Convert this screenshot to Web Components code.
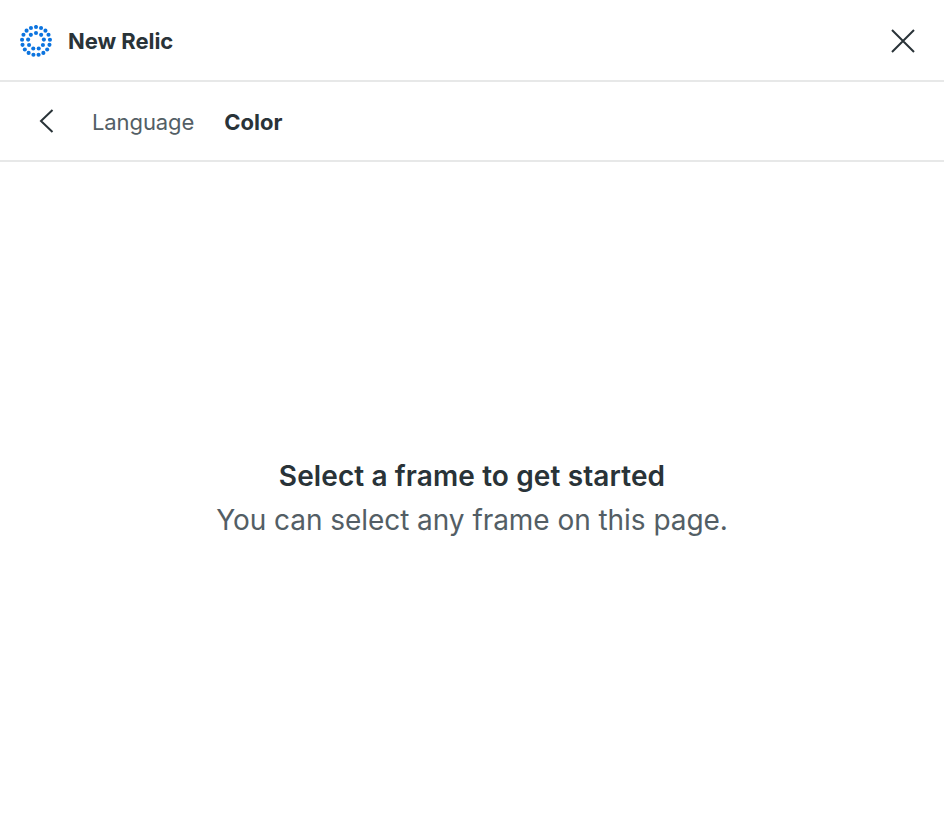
<!DOCTYPE html>
<html lang="en"><head><meta charset="utf-8"><title>New Relic</title>
<style>
html,body{margin:0;height:100%}
body{font-family:Inter,"Liberation Sans",sans-serif;color:#293338;background:#fff}
</style></head><body>
<relic-window>
<title-bar slot="top">New Relic</title-bar>
<tab-bar slot="top"><tab-item>Language</tab-item><tab-item active>Color</tab-item></tab-bar>
<empty-state><span slot="heading">Select a frame to get started</span>You can select any frame on this page.</empty-state>
</relic-window>
<script>
const define=(name,html)=>customElements.define(name,class extends HTMLElement{
 constructor(){super();this.attachShadow({mode:'open'}).innerHTML=html;}
});
const dots=(count,radius,size)=>Array.from({length:count},(_,i)=>{
 const a=i*2*Math.PI/count-Math.PI/2;
 return `<circle cx="${(16+radius*Math.cos(a)).toFixed(3)}" cy="${(16+radius*Math.sin(a)).toFixed(3)}" r="${size}"/>`;
}).join('');
define('relic-window',`<style>:host{display:flex;flex-direction:column;height:100vh;overflow:hidden}main{flex:1;display:flex;flex-direction:column}</style><slot name="top"></slot><main><slot></slot></main>`);
define('relic-logo',`<style>:host{display:block;width:32px;height:32px}svg{display:block}</style><svg width="32" height="32" fill="#0c74df">${dots(17,14,2.05)}${dots(9,8,2.05)}</svg>`);
define('title-bar',`<style>:host{box-sizing:border-box;display:flex;align-items:center;height:82px;padding:2px 28px 0 20px;border-bottom:2px solid #e7e8e8;font-size:22px;font-weight:700;letter-spacing:-.04px;line-height:32px}span{margin-left:16px;flex:1}svg{display:block}</style><relic-logo></relic-logo><span><slot></slot></span><svg width="26" height="26" fill="none" stroke="#293338" stroke-width="2"><path d="M2 2L24 24M24 2L2 24"/></svg>`);
define('tab-bar',`<style>:host{box-sizing:border-box;display:flex;align-items:center;height:80px;border-bottom:2px solid #e7e8e8;padding-left:38px}svg{display:block;margin-right:38px}div{display:flex;gap:30px;padding-top:2px}</style><svg width="16" height="26" fill="none" stroke="#293338" stroke-width="2"><path d="M14.5 2L3 13L14.5 24"/></svg><div><slot></slot></div>`);
define('tab-item',`<style>:host{display:block;font-size:22px;line-height:32px;color:#535e65;letter-spacing:-.1px}:host([active]){font-weight:700;letter-spacing:0;color:#293338}</style><slot></slot>`);
define('empty-state',`<style>:host{flex:1;display:flex;flex-direction:column;align-items:center;justify-content:center;padding-bottom:2px;font-size:28px;line-height:44px;color:#535e65}h1{margin:0;font:inherit;font-weight:600;letter-spacing:.11px;color:#293338}p{margin:0;letter-spacing:-.05px}</style><h1><slot name="heading"></slot></h1><p><slot></slot></p>`);
</script></body></html>
